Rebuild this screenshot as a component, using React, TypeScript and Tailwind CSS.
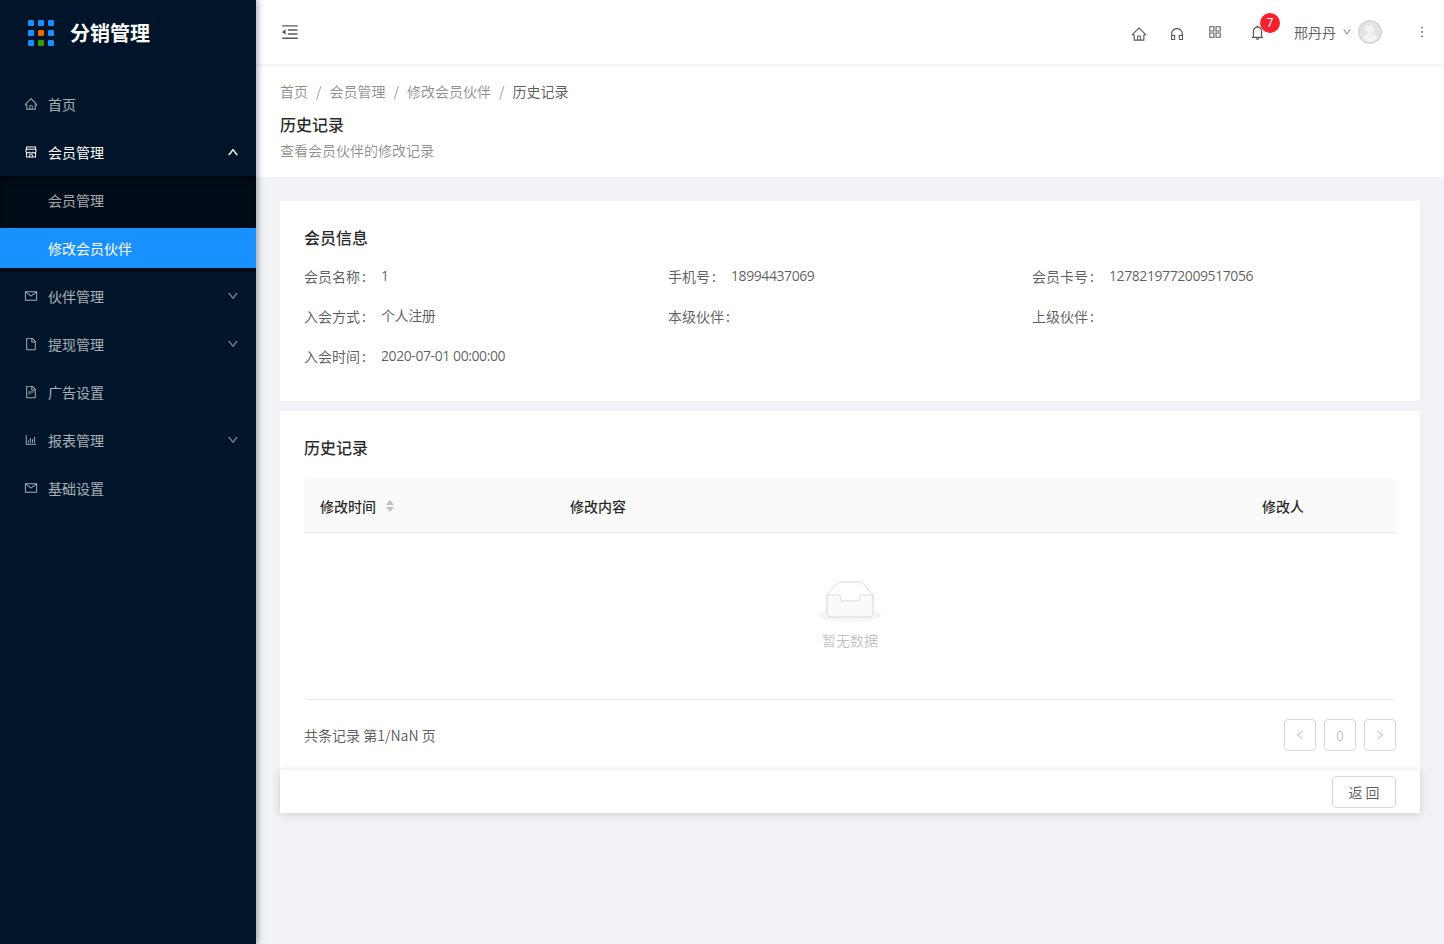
import type { ReactNode } from "react";
import {
  AiOutlineAppstore,
  AiOutlineBarChart,
  AiOutlineBell,
  AiOutlineCustomerService,
  AiOutlineDown,
  AiOutlineFile,
  AiOutlineFileText,
  AiOutlineHome,
  AiOutlineLeft,
  AiOutlineMail,
  AiOutlineMenuFold,
  AiOutlineMore,
  AiOutlineRight,
  AiOutlineShop,
  AiOutlineUp,
} from "react-icons/ai";

function Logo() {
  const colors = [
    "#1890ff", "#1890ff", "#1890ff",
    "#1890ff", "#f56a00", "#1890ff",
    "#1890ff", "#389e0d", "#1890ff",
  ];
  return (
    <div className="grid grid-cols-3 gap-[4px]">
      {colors.map((c, i) => (
        <svg key={i} width="6" height="6" viewBox="0 0 6 6" className="block">
          <rect width="6" height="6" rx="1.2" fill={c} />
        </svg>
      ))}
    </div>
  );
}

function NavItem({
  icon,
  label,
  active,
  arrow,
}: {
  icon: ReactNode;
  label: string;
  active?: boolean;
  arrow?: "up" | "down";
}) {
  return (
    <div
      className={`flex h-12 items-center pl-6 pr-[17px] text-sm ${
        active ? "text-white" : "text-white/65"
      }`}
    >
      <span className="mr-[10px] flex w-[14px] justify-center text-sm">{icon}</span>
      <span className="flex-1">{label}</span>
      {arrow === "up" && <AiOutlineUp className="text-[12px] text-white" strokeWidth={50} />}
      {arrow === "down" && <AiOutlineDown className="text-[12px] text-white/45" strokeWidth={30} />}
    </div>
  );
}

function Sidebar() {
  return (
    <aside className="relative z-20 flex w-[256px] shrink-0 flex-col bg-[#001529] shadow-[2px_0_6px_rgba(0,21,41,0.35)]">
      <div className="flex h-20 items-start pl-[28px] pt-[20px]">
        <Logo />
        <h1 className="ml-[16px] mt-[-1px] text-[20px] font-bold leading-[28px] text-white">分销管理</h1>
      </div>
      <NavItem icon={<AiOutlineHome />} label="首页" />
      <NavItem icon={<AiOutlineShop />} label="会员管理" active arrow="up" />
      <div className="flex flex-col bg-[#000c17] pb-1 pt-1 shadow-[inset_0_2px_8px_rgba(0,0,0,0.45)]">
        <div className="mb-2 flex h-10 items-center pl-12 text-sm text-white/65">会员管理</div>
        <div className="flex h-10 items-center bg-[#1890ff] pl-12 text-sm text-white">修改会员伙伴</div>
      </div>
      <NavItem icon={<AiOutlineMail />} label="伙伴管理" arrow="down" />
      <NavItem icon={<AiOutlineFile />} label="提现管理" arrow="down" />
      <NavItem icon={<AiOutlineFileText />} label="广告设置" />
      <NavItem icon={<AiOutlineBarChart />} label="报表管理" arrow="down" />
      <NavItem icon={<AiOutlineMail />} label="基础设置" />
    </aside>
  );
}

function Header() {
  return (
    <header className="relative z-10 flex h-16 shrink-0 items-center bg-white pl-6 pr-[14px] shadow-[0_1px_4px_rgba(0,21,41,0.08)]">
      <AiOutlineMenuFold className="text-[20px] text-black/65" />
      <div className="ml-auto flex items-center text-black/65">
        <span className="flex w-[38px] justify-center pt-[4px] text-base"><AiOutlineHome /></span>
        <span className="flex w-[38px] justify-center pt-[4px] text-base"><AiOutlineCustomerService /></span>
        <span className="flex w-[38px] justify-center text-base"><AiOutlineAppstore /></span>
        <span className="relative flex w-[48px] justify-center text-[17px]">
          <AiOutlineBell className="mr-[2px]" />
          <span className="absolute left-[26px] top-[-11px] flex h-5 w-5 items-center justify-center rounded-full bg-[#f5222d] font-['Open_Sans'] text-xs text-white">
            7
          </span>
        </span>
        <span className="ml-[12px] text-sm">邢丹丹</span>
        <AiOutlineDown className="ml-[6px] text-[10px]" />
        <span className="ml-[6px] flex h-6 w-6 items-center justify-center rounded-full bg-[#d9d9d9]">
          <svg viewBox="0 0 24 24" width="24" height="24">
            <circle cx="12" cy="12" r="10" fill="#e4e4e4" />
            <circle cx="12" cy="9.5" r="4" fill="#f4f4f4" />
            <path d="M4.5 18.5c1.5-3.5 4.5-4.5 7.5-4.5s6 1 7.5 4.5A10 10 0 0 1 12 22a10 10 0 0 1-7.500-3.500z" fill="#f4f4f4" />
          </svg>
        </span>
        <AiOutlineMore className="ml-[32px] text-base" />
      </div>
    </header>
  );
}

function PageHeader() {
  return (
    <div className="flex h-[113px] shrink-0 flex-col bg-white px-6 pt-4 text-sm">
      <div className="flex h-[22px] items-center text-black/45">
        <span>首页</span>
        <span className="mx-2">/</span>
        <span>会员管理</span>
        <span className="mx-2">/</span>
        <span>修改会员伙伴</span>
        <span className="mx-2">/</span>
        <span className="text-black/65">历史记录</span>
      </div>
      <h2 className="mt-[10px] text-base font-medium leading-6 text-black/85">历史记录</h2>
      <p className="mt-[3px] leading-[22px] text-black/45">查看会员伙伴的修改记录</p>
    </div>
  );
}

function Field({ label, value }: { label: string; value?: string }) {
  return (
    <div className="flex h-[22px] items-center text-sm text-black/65">
      <span className="flex">
        {label}
        <span className="w-[21px] pl-[2px]">:</span>
      </span>
      <span className="font-['Open_Sans','Noto_Sans_CJK_SC',sans-serif] tracking-[-0.42px]">{value}</span>
    </div>
  );
}

function MemberInfo() {
  return (
    <section className="h-[200px] bg-white px-6 pt-6">
      <h3 className="text-base font-medium leading-6 text-black/85">会员信息</h3>
      <div className="mt-[16px] grid grid-cols-[364px_364px_1fr] gap-y-[18px]">
        <Field label="会员名称" value="1" />
        <Field label="手机号" value="18994437069" />
        <Field label="会员卡号" value="1278219772009517056" />
        <Field label="入会方式" value="个人注册" />
        <Field label="本级伙伴" />
        <Field label="上级伙伴" />
        <Field label="入会时间" value="2020-07-01 00:00:00" />
      </div>
    </section>
  );
}

function SortCaret() {
  return (
    <svg width="10" height="14" viewBox="0 0 10 14" className="ml-[9px]">
      <path d="M5 1l4 5H1z" fill="#bfbfbf" />
      <path d="M5 13L1 8h8z" fill="#bfbfbf" />
    </svg>
  );
}

function EmptyIcon() {
  return (
    <svg width="64" height="41" viewBox="0 0 64 41">
      <g transform="translate(0 1)" fill="none" fillRule="evenodd">
        <ellipse fill="#F5F5F5" cx="32" cy="33" rx="32" ry="7" />
        <g fillRule="nonzero" stroke="#D9D9D9">
          <path d="M55 12.76L44.854 1.258C44.367.474 43.656 0 42.907 0H21.093c-.749 0-1.46.474-1.947 1.257L9 12.761V22h46v-9.24z" />
          <path
            d="M41.613 15.931c0-1.605.994-2.93 2.227-2.931H55v18.137C55 33.26 53.68 35 52.05 35h-40.1C10.32 35 9 33.259 9 31.137V13h11.16c1.233 0 2.227 1.323 2.227 2.928v.022c0 1.605 1.005 2.901 2.237 2.901h14.752c1.232 0 2.237-1.308 2.237-2.913v-.007z"
            fill="#FAFAFA"
          />
        </g>
      </g>
    </svg>
  );
}

function PageBox({ children }: { children: ReactNode }) {
  return (
    <span className="flex h-8 w-8 items-center justify-center rounded border border-[#d9d9d9] text-sm text-black/25">
      {children}
    </span>
  );
}

function History() {
  return (
    <section className="mt-[10px] bg-white px-6 pt-6">
      <h3 className="text-base font-medium leading-6 text-black/85">历史记录</h3>
      <div className="mt-[20px] grid h-[54px] grid-cols-[250px_1fr_150px] items-center rounded-t border-b border-[#e8e8e8] bg-[#fafafa] text-sm font-medium text-black/85">
        <div className="flex items-center pl-4">
          修改时间
          <SortCaret />
        </div>
        <div className="pl-4">修改内容</div>
        <div className="pl-4">修改人</div>
      </div>
      <div className="flex h-[167px] flex-col items-center rounded-b border-b border-[#e8e8e8] pt-[48px]">
        <EmptyIcon />
        <span className="mt-[7px] text-sm leading-[22px] text-black/25">暂无数据</span>
      </div>
      <div className="flex h-[70px] items-center justify-between text-sm text-black/65">
        <span>共条记录 第1/NaN 页</span>
        <div className="flex gap-2">
          <PageBox><AiOutlineLeft className="text-xs" /></PageBox>
          <PageBox>0</PageBox>
          <PageBox><AiOutlineRight className="text-xs" /></PageBox>
        </div>
      </div>
    </section>
  );
}

function FooterBar() {
  return (
    <div className="relative flex h-[43px] items-center justify-end bg-white px-6 shadow-[0_1px_8px_rgba(0,0,0,0.15)]">
      <button className="h-8 w-16 rounded border border-[#d9d9d9] bg-white text-sm text-black/65">返 回</button>
    </div>
  );
}

export default function App() {
  return (
    <div className="flex min-h-[944px] bg-[#f0f2f5] font-['Noto_Sans_CJK_SC','Noto_Sans',sans-serif]">
      <Sidebar />
      <main className="flex min-w-0 flex-1 flex-col">
        <Header />
        <PageHeader />
        <div className="p-6">
          <MemberInfo />
          <History />
          <FooterBar />
        </div>
      </main>
    </div>
  );
}
